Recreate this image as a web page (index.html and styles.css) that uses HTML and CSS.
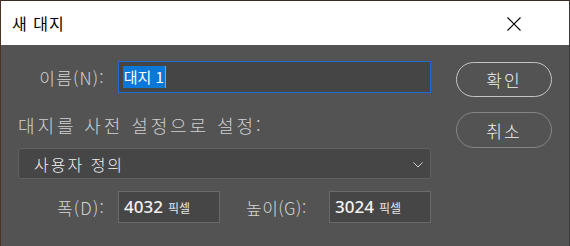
FILE: index.html
```html
<!DOCTYPE html>
<html lang="ko">
<head>
<meta charset="utf-8">
<title>새 대지</title>
<link rel="stylesheet" href="styles.css">
</head>
<body>
<div class="window">
  <div class="titlebar">
    <span class="title">새 대지</span>
    <svg class="close" width="14" height="14" viewBox="0 0 14 14"><path d="M0.5 0.5L13.5 13.5M13.5 0.5L0.5 13.5" stroke="#000" stroke-width="1.1" fill="none"/></svg>
  </div>
  <div class="content">
    <div class="main">
      <div class="row name-row">
        <label class="label">이름(N):</label>
        <div class="name-input"><span class="sel">대지 1</span><span class="caret"></span></div>
      </div>
      <div class="preset-label">대지를 사전 설정으로 설정:</div>
      <div class="dropdown">
        <span>사용자 정의</span>
        <svg class="chev" width="10" height="6" viewBox="0 0 10 6"><path d="M0.5 0.5L5 5L9.5 0.5" stroke="#cfcfcf" stroke-width="1" fill="none"/></svg>
      </div>
      <div class="row size-row">
        <label class="label">폭(D):</label>
        <div class="num-input"><span class="num">4032</span><span class="unit">픽셀</span></div>
        <label class="label2">높이(G):</label>
        <div class="num-input"><span class="num">3024</span><span class="unit">픽셀</span></div>
      </div>
    </div>
    <div class="buttons">
      <div class="btn ok">확인</div>
      <div class="btn cancel">취소</div>
    </div>
  </div>
</div>
</body>
</html>
```
FILE: styles.css
```css
* { box-sizing: border-box; }
html, body { margin: 0; padding: 0; background: #535353; }
body { font-family: "Noto Sans CJK KR", "Noto Sans", sans-serif; font-weight: 300; }
.window {
  width: 570px; height: 246px;
  border-left: 1px solid #4b3226;
  border-top: 1px solid #3a2a22;
  border-right: 1px solid #3c3c3c;
  background: #535353;
  display: flex; flex-direction: column;
}
.titlebar {
  height: 44px; background: #fff;
  display: flex; align-items: center; justify-content: space-between;
  padding: 0 48px 0 11px;
}
.title { font-size: 16px; color: #000; letter-spacing: 1px; font-weight: 400; }
.close { margin-top: 1px; }
.content { display: flex; padding-left: 17px; }
.main { width: 413px; display: flex; flex-direction: column; }
.row { display: flex; align-items: center; }
.label { width: 87px; text-align: right; color: #d4d4d4; font-size: 17px; letter-spacing: 1.2px; }
.name-row { margin-top: 16px; height: 32px; }
.name-input {
  margin-left: 13px; width: 314px; height: 32px;
  background: #454545; border: 1px solid #1d6dd3;
  display: flex; align-items: center; padding-left: 4px;
}
.sel { background: #0b78d8; color: #fff; font-size: 15px; line-height: 22px; padding: 0 1px; font-weight: 400; }
.caret { width: 1px; height: 22px; background: #f08a24; }
.preset-label { margin-top: 20px; height: 25px; color: #d0d0d0; font-size: 18px; letter-spacing: 2.9px; line-height: 25px; white-space: nowrap; }
.dropdown {
  margin-top: 10px; height: 31px; width: 413px;
  background: #464646; border: 1px solid #616161; border-radius: 3px;
  display: flex; align-items: center; justify-content: space-between;
  padding: 0 7px 0 15px; color: #f0f0f0; font-size: 16px; letter-spacing: 2px;
}
.chev { margin-top: 2px; }
.size-row { margin-top: 12px; height: 32px; }
.num-input {
  margin-left: 13px; width: 102px; height: 32px;
  background: #464646; border: 1px solid #6a6a6a;
  display: flex; align-items: baseline; padding: 3px 0 0 5px; gap: 5px;
}
.num { color: #f2f2f2; font-size: 17px; font-weight: 500; font-family: "Noto Sans", sans-serif; }
.unit { color: #e6e6e6; font-size: 12px; font-weight: 400; }
.label2 { margin-left: 26px; width: 70px; color: #d4d4d4; font-size: 17px; letter-spacing: 0.5px; white-space: nowrap; }
.buttons { margin-left: 25px; display: flex; flex-direction: column; }
.btn {
  width: 96px; border-radius: 18px;
  display: flex; align-items: center; justify-content: center;
  color: #f0f0f0; font-size: 17px; letter-spacing: 2px;
}
.ok { margin-top: 17px; height: 35px; border: 1.5px solid #c4c4c4; }
.cancel { margin-top: 15px; height: 36px; border: 1.5px solid #858585; }
```
